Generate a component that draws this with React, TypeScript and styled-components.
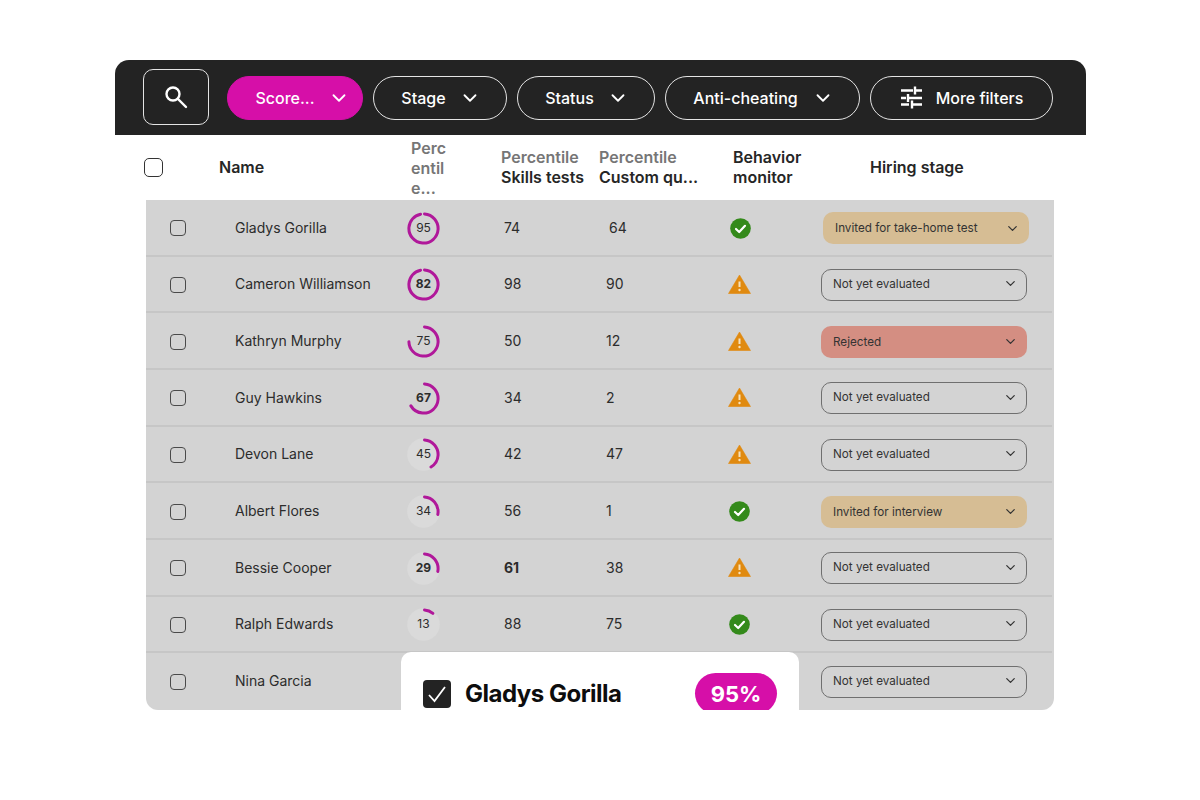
import React from "react";
import styled, { createGlobalStyle } from "styled-components";
import { ChevronDown } from "lucide-react";

const Global = createGlobalStyle`
  html, body { margin: 0; padding: 0; background: #fff; }
  body { font-family: Inter, "Liberation Sans", sans-serif; }
`;

const Page = styled.div`
  width: 1200px;
  height: 800px;
  box-sizing: border-box;
  padding: 60px 114px 0 115px;
  overflow: hidden;
`;

const Toolbar = styled.div`
  height: 75px;
  box-sizing: border-box;
  background: #232323;
  border-radius: 14px 14px 0 0;
  padding: 0 33px 0 28px;
  display: flex;
  align-items: center;
`;

const SearchButton = styled.div`
  width: 66px;
  height: 56px;
  box-sizing: border-box;
  border: 1px solid #e4e4e4;
  border-radius: 10px;
  display: flex;
  align-items: center;
  justify-content: center;
  margin: 0 18px 2px 0;
  color: #fff;
`;

const Pill = styled.div<{ $w: number; $active?: boolean; $gap: number; $pad?: number }>`
  width: ${(p) => p.$w}px;
  height: 44px;
  box-sizing: border-box;
  border-radius: 22px;
  border: 1px solid ${(p) => (p.$active ? "#d60fa8" : "#e4e4e4")};
  background: ${(p) => (p.$active ? "#d60fa8" : "transparent")};
  color: #fff;
  display: flex;
  align-items: center;
  justify-content: center;
  gap: ${(p) => p.$gap}px;
  padding-left: ${(p) => p.$pad ?? 0}px;
  font-size: 16px;
  font-weight: 500;
  margin-right: 10px;
  &:last-child { margin-right: 0; }
`;

const Head = styled.div`
  height: 65px;
  box-sizing: border-box;
  display: grid;
  grid-template-columns: 75px 192px 90px 98px 134px 137px 1fr;
  padding: 0 0 2px 29px;
  align-items: center;
  font-size: 16px;
  font-weight: 600;
  line-height: 20px;
  color: #262626;
`;

const HeadBox = styled.span`
  width: 19px;
  height: 19px;
  box-sizing: border-box;
  border: 1.5px solid #333;
  border-radius: 5px;
  margin-top: 2px;
`;

const Muted = styled.span`
  color: #767676;
  display: block;
`;

const NarrowHead = styled.div`
  width: 40px;
  word-break: break-all;
  line-height: 20px;
  margin-top: 3px;
`;

const NoWrap = styled.div`
  white-space: nowrap;
`;

const TableWrap = styled.div`
  position: relative;
  margin: 0 32px 0 31px;
  height: 510px;
  background: #d3d3d3;
  border-radius: 0 0 12px 12px;
  overflow: hidden;
  display: grid;
  grid-template-rows: repeat(9, 1fr);
`;

const Row = styled.div`
  display: grid;
  grid-template-columns: 89px 172px 97px 102px 122px 93px 1fr;
  align-items: center;
  min-height: 0;
  box-shadow: inset 0 -2px 0 #c6c6c6;
  margin-right: 2px;
  font-size: 14px;
  color: #2c2c2c;
  &:nth-of-type(9) { box-shadow: none; }
`;

const RowBox = styled.span`
  margin-left: 24px;
  width: 16px;
  height: 16px;
  box-sizing: border-box;
  border: 1.4px solid #4a4a4a;
  border-radius: 4px;
`;

const Name = styled.span`
  margin-bottom: 2px;
`;

const Num = styled.span<{ $bold?: boolean; $shift?: number }>`
  font-weight: ${(p) => (p.$bold ? 700 : 400)};
  margin: 0 0 2px ${(p) => p.$shift ?? 0}px;
`;

const IconCell = styled.span<{ $shift?: number; $lift?: number }>`
  display: flex;
  margin: 0 0 ${(p) => p.$lift ?? 0}px ${(p) => p.$shift ?? 0}px;
`;

const RingBox = styled.div`
  position: relative;
  width: 33px;
  height: 33px;
`;

const RingLabel = styled.span<{ $bold?: boolean }>`
  position: absolute;
  inset: 0 0 2px;
  display: flex;
  align-items: center;
  justify-content: center;
  font-size: 12px;
  font-weight: ${(p) => (p.$bold ? 700 : 400)};
`;

const Select = styled.div<{ $kind: string; $shift?: number }>`
  width: 206px;
  height: 32px;
  box-sizing: border-box;
  margin-left: ${(p) => p.$shift ?? 0}px;
  border-radius: 10px;
  padding: 0 8px ${(p) => (p.$kind === "plain" ? 2 : 0)}px 11px;
  display: flex;
  align-items: center;
  justify-content: space-between;
  font-size: 11.7px;
  color: #333;
  background: ${(p) =>
    p.$kind === "tan" ? "#d6bd94" : p.$kind === "red" ? "#d48e82" : "transparent"};
  border: 1px solid ${(p) => (p.$kind === "plain" ? "#6f6f6f" : "transparent")};
`;

const Popup = styled.div`
  position: absolute;
  left: 255px;
  top: 452px;
  width: 398px;
  height: 90px;
  background: #fff;
  border-radius: 10px 10px 0 0;
  display: flex;
  align-items: flex-start;
  box-sizing: border-box;
  padding: 21px 22px 0 22px;
`;

const PopCheck = styled.div`
  width: 28px;
  height: 28px;
  margin-top: 7px;
  background: #232323;
  border-radius: 4px;
  display: flex;
  align-items: center;
  justify-content: center;
`;

const PopName = styled.div`
  margin-left: 14px;
  margin-top: 7px;
  font-size: 24px;
  line-height: 28px;
  font-weight: 700;
  letter-spacing: -0.5px;
  color: #0d0d0d;
  flex: 1;
`;

const Badge = styled.div`
  width: 82px;
  height: 41px;
  border-radius: 21px;
  background: #d60fa8;
  color: #fff;
  font-size: 22px;
  font-weight: 700;
  display: flex;
  align-items: center;
  justify-content: center;
`;

const Ring = ({ v, arc, bold, disk }: { v: number; arc: number; bold?: boolean; disk?: boolean }) => {
  const r = 14.6;
  const c = 2 * Math.PI * r;
  return (
    <RingBox>
      <svg width="33" height="33" viewBox="0 0 33 33">
        {disk && <circle cx="16.500" cy="16.500" r="16.300" fill="#dadada" />}
        <circle
          cx="16.500"
          cy="16.500"
          r={r}
          fill="none"
          stroke="#b0189a"
          strokeWidth="3"
          strokeLinecap="round"
          strokeDasharray={`${c * arc} ${c}`}
          transform="rotate(-86 16.500 16.500)"
        />
      </svg>
      <RingLabel $bold={bold}>{v}</RingLabel>
    </RingBox>
  );
};

const Check = () => (
  <svg width="21" height="21" viewBox="0 0 21 21">
    <circle cx="10.5" cy="10.5" r="10.3" fill="#348a1b" />
    <path d="M6 11l3.2 3L15 7.8" fill="none" stroke="#fff" strokeWidth="2.2" strokeLinecap="round" strokeLinejoin="round" />
  </svg>
);

const Warn = () => (
  <svg width="23" height="20" viewBox="0 0 23 20">
    <path d="M11.5 1L22.5 19.500H.5z" fill="#e08a10" stroke="#e08a10" strokeWidth="0.6" strokeLinejoin="round" />
    <path d="M11.5 7.500v5.500" stroke="#f6e2bd" strokeWidth="2" />
    <circle cx="11.5" cy="16" r="1.2" fill="#f6e2bd" />
  </svg>
);

const Sliders = () => (
  <svg width="24" height="24" viewBox="0 0 24 24" fill="none" stroke="#fff" strokeWidth="2.4">
    <path d="M1 4.500h12M15 .5v8M15 4.500h7" />
    <path d="M1 12h5M8 8v8M8 12h14" />
    <path d="M1 18.500h8M12 14.500v8M12 18.500h10" />
  </svg>
);

const Magnifier = () => (
  <svg width="24" height="24" viewBox="0 0 24 24" fill="none" stroke="#fff" strokeWidth="2.4" strokeLinecap="round">
    <circle cx="9" cy="9" r="6.500" />
    <path d="M14 14l8 8" />
  </svg>
);

type R = {
  name: string; v: number; arc: number; vb?: boolean; disk?: boolean;
  s: number; sb?: boolean; c: number; ok: boolean; st: string; kind: string;
};

const rows: R[] = [
  { name: "Gladys Gorilla", v: 95, arc: 0.95, s: 74, c: 64, ok: true, st: "Invited for take-home test", kind: "tan" },
  { name: "Cameron Williamson", v: 82, arc: 0.95, vb: true, s: 98, c: 90, ok: false, st: "Not yet evaluated", kind: "plain" },
  { name: "Kathryn Murphy", v: 75, arc: 0.73, s: 50, c: 12, ok: false, st: "Rejected", kind: "red" },
  { name: "Guy Hawkins", v: 67, arc: 0.65, vb: true, s: 34, c: 2, ok: false, st: "Not yet evaluated", kind: "plain" },
  { name: "Devon Lane", v: 45, arc: 0.4, disk: true, s: 42, c: 47, ok: false, st: "Not yet evaluated", kind: "plain" },
  { name: "Albert Flores", v: 34, arc: 0.27, disk: true, s: 56, c: 1, ok: true, st: "Invited for interview", kind: "tan" },
  { name: "Bessie Cooper", v: 29, arc: 0.27, vb: true, disk: true, s: 61, sb: true, c: 38, ok: false, st: "Not yet evaluated", kind: "plain" },
  { name: "Ralph Edwards", v: 13, arc: 0.1, disk: true, s: 88, c: 75, ok: true, st: "Not yet evaluated", kind: "plain" },
  { name: "Nina Garcia", v: 0, arc: 0, s: 0, c: 0, ok: true, st: "Not yet evaluated", kind: "plain" },
];

export default function App() {
  return (
    <Page>
      <Global />
      <Toolbar>
        <SearchButton><Magnifier /></SearchButton>
        <Pill $w={136} $gap={13} $pad={15} $active>Score... <ChevronDown size={22} /></Pill>
        <Pill $w={134} $gap={13} $pad={2}>Stage <ChevronDown size={22} /></Pill>
        <Pill $w={138} $gap={13} $pad={2}>Status <ChevronDown size={22} /></Pill>
        <Pill $w={195} $gap={14} $pad={2}>Anti-cheating <ChevronDown size={22} /></Pill>
        <Pill $w={183} $gap={12}><Sliders /> More filters</Pill>
      </Toolbar>
      <Head>
        <HeadBox />
        <div>Name</div>
        <NarrowHead><Muted>Percentile...</Muted></NarrowHead>
        <NoWrap><Muted>Percentile</Muted>Skills tests</NoWrap>
        <NoWrap><Muted>Percentile</Muted>Custom qu...</NoWrap>
        <div>Behavior<br />monitor</div>
        <div>Hiring stage</div>
      </Head>
      <TableWrap>
        {rows.map((r, i) => (
          <Row key={r.name}>
            <RowBox />
            <Name>{r.name}</Name>
            {r.arc ? <Ring v={r.v} arc={r.arc} bold={r.vb} disk={r.disk} /> : <span />}
            {r.s ? <Num $bold={r.sb}>{r.s}</Num> : <span />}
            {r.c ? <Num $shift={i === 0 ? 3 : 0}>{r.c}</Num> : <span />}
            {i === 8 ? <span /> : r.ok ? <IconCell $shift={i === 0 ? 2 : 1}><Check /></IconCell> : <IconCell $lift={2}><Warn /></IconCell>}
            <Select $kind={r.kind} $shift={i === 0 ? 2 : 0}>
              {r.st}
              <ChevronDown size={15} />
            </Select>
          </Row>
        ))}
        <Popup>
          <PopCheck>
            <svg width="22" height="22" viewBox="0 0 22 22"><path d="M3 12l5.500 6L19 4" fill="none" stroke="#fff" strokeWidth="1.800" /></svg>
          </PopCheck>
          <PopName>Gladys Gorilla</PopName>
          <Badge>95%</Badge>
        </Popup>
      </TableWrap>
    </Page>
  );
}
